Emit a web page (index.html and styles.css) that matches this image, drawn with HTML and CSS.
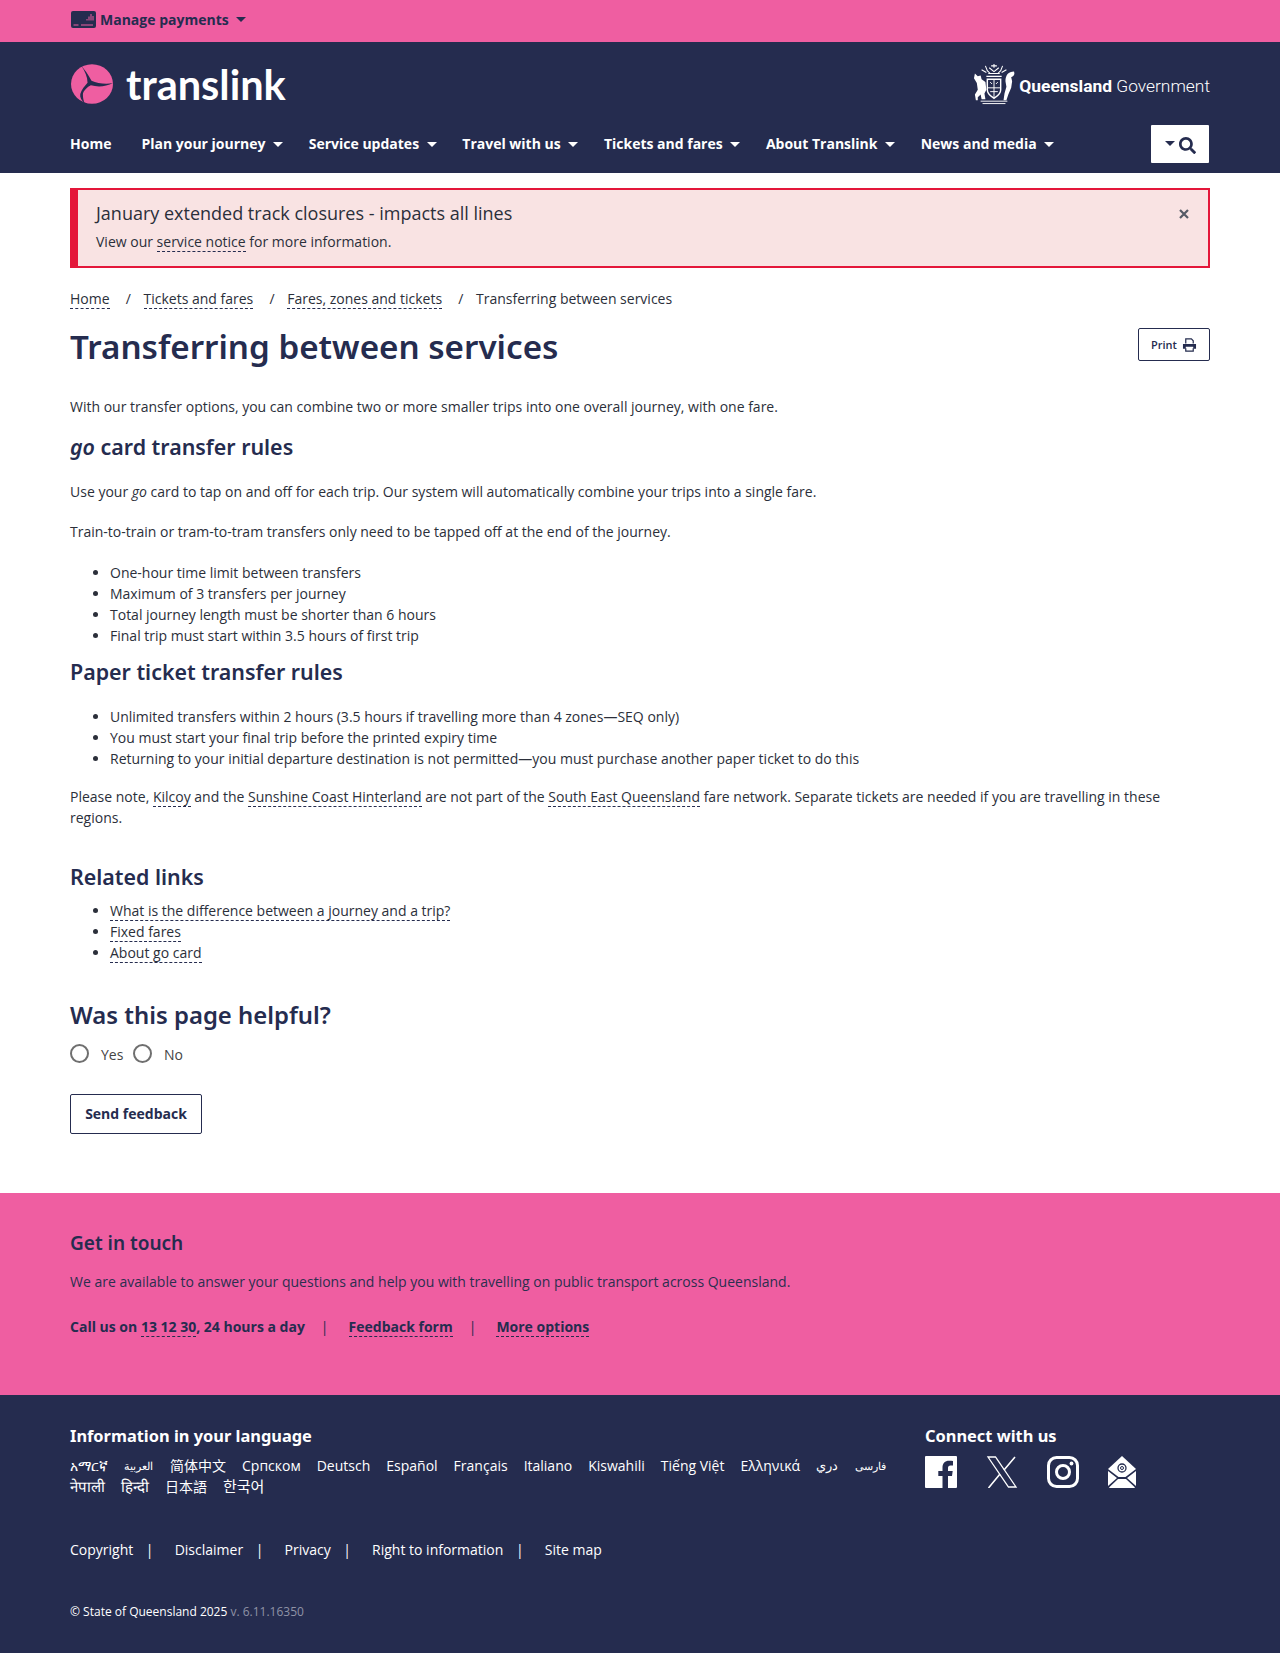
FILE: index.html
```html
<!DOCTYPE html>
<html lang="en">
<head>
<meta charset="utf-8">
<title>Transferring between services</title>
<link rel="stylesheet" href="styles.css">
</head>
<body>
<div class="topbar">
  <div class="wrap topbar-in">
    <svg class="card-ico" viewBox="0 0 25 17" width="25" height="17"><rect width="25" height="17" rx="2" fill="#252c4f"/><path d="M2.500 14h5M10 14h12" stroke="#ef5ea1" stroke-width="1"/><path d="M16 9.500V8M18 9.500V5.500M20 9.500V3M22 9.500V5" stroke="#ef5ea1" stroke-width="1"/></svg>
    <span class="pay">Manage payments</span><i class="caret dark"></i>
  </div>
</div>
<header class="head">
  <div class="wrap">
    <div class="brand-row">
      <div class="logo">
        <svg viewBox="0 0 127 120" width="42" height="40"><ellipse cx="63.500" cy="60" rx="63.500" ry="60" fill="#ef5ea1"/><path d="M30 3C40 15 52 30 62 50 80 58 106 62 127 57 106 68 82 70 60 64 50 68 36 82 36 92 36 102 38 112 42 119 32 110 26 100 28 90 32 76 42 66 50 56 50 38 42 20 30 3Z" fill="#252c4f"/></svg>
        <span class="logo-text">translink</span>
      </div>
      <div class="qg">
        <svg class="crest" viewBox="0 0 44 44" width="42" height="42" fill="none" stroke="#fff"><path d="M22 1v4M19 3h6M17 5l5 4 5-4M13 3l2 5 3 3M31 3l-2 5-3 3M9 7l5 3M35 7l-5 3M16 11h12M14 14h16" stroke-width="1.100"/><path d="M15 17h14v11c0 5-4 7-7 9-3-2-7-4-7-9z" stroke-width="1.500"/><path d="M22 17v20M15 26h14M18 20l2 2M26 20l-2 2M18 30h8" stroke-width="1"/><path d="M2 11l3 3 3-1 1 4 4 3 1 8-2 4 1 6H9l-1-5-3 3v3H3l-1-6 3-5-1-7-3-5z" fill="#fff" stroke="none"/><path d="M43 9c-6 0-9 4-9 10l1 6-2 7-1 7h3l2-6 3-7 1-7-1-4c3-1 4-3 3-6z" fill="#fff" stroke="none"/><path d="M8 40h28M10 42.500h24" stroke-width="1"/></svg>
        <span><b>Queensland</b> Government</span>
      </div>
    </div>
    <nav class="nav">
      <a>Home</a>
      <a>Plan your journey<i class="caret"></i></a>
      <a>Service updates<i class="caret"></i></a>
      <a>Travel with us<i class="caret"></i></a>
      <a>Tickets and fares<i class="caret"></i></a>
      <a>About Translink<i class="caret"></i></a>
      <a>News and media<i class="caret"></i></a>
      <button class="search"><i class="caret dark small"></i><svg viewBox="0 0 512 512" width="17" height="17"><path fill="#252c4f" d="M505 442.700L405.300 343c-4.500-4.500-10.600-7-17-7H372c27.600-35.300 44-79.700 44-128C416 93.100 322.900 0 208 0S0 93.100 0 208s93.100 208 208 208c48.300 0 92.700-16.400 128-44v16.300c0 6.400 2.500 12.500 7 17l99.700 99.700c9.400 9.400 24.600 9.400 33.900 0l28.300-28.300c9.400-9.400 9.400-24.600.1-34zM208 336c-70.700 0-128-57.200-128-128 0-70.700 57.200-128 128-128 70.700 0 128 57.200 128 128 0 70.700-57.200 128-128 128z"/></svg></button>
    </nav>
  </div>
</header>
<main class="wrap main">
  <section class="alert">
    <div>
      <p class="alert-title">January extended track closures - impacts all lines</p>
      <p class="alert-sub">View our <a class="lnk">service notice</a> for more information.</p>
    </div>
    <svg class="close" viewBox="0 0 10 10" width="10" height="10"><path d="M1 1l8 8M9 1l-8 8" stroke="#555a66" stroke-width="2.200"/></svg>
  </section>
  <div class="crumbs">
    <a class="lnk">Home</a><span class="sep">/</span><a class="lnk">Tickets and fares</a><span class="sep">/</span><a class="lnk">Fares, zones and tickets</a><span class="sep">/</span><span>Transferring between services</span>
  </div>
  <div class="title-row">
    <h1>Transferring between services</h1>
    <button class="print">Print <svg viewBox="0 0 16 15" width="15" height="14"><path d="M4 6V1h6l2 2v3M4 11v3h8v-3" fill="none" stroke="#252c4f" stroke-width="1.300"/><path d="M1 6.500h14v5h-3v-2H4v2H1z" fill="#252c4f"/></svg></button>
  </div>
  <p class="intro">With our transfer options, you can combine two or more smaller trips into one overall journey, with one fare.</p>
  <h2 class="h-go"><em>go</em> card transfer rules</h2>
  <p class="p1">Use your <em>go</em> card to tap on and off for each trip. Our system will automatically combine your trips into a single fare.</p>
  <p class="p2">Train-to-train or tram-to-tram transfers only need to be tapped off at the end of the journey.</p>
  <ul class="l1">
    <li>One-hour time limit between transfers</li>
    <li>Maximum of 3 transfers per journey</li>
    <li>Total journey length must be shorter than 6 hours</li>
    <li>Final trip must start within 3.5 hours of first trip</li>
  </ul>
  <h2 class="h-paper">Paper ticket transfer rules</h2>
  <ul class="l2">
    <li>Unlimited transfers within 2 hours (3.5 hours if travelling more than 4 zones—SEQ only)</li>
    <li>You must start your final trip before the printed expiry time</li>
    <li>Returning to your initial departure destination is not permitted—you must purchase another paper ticket to do this</li>
  </ul>
  <p class="note">Please note, <a class="lnk">Kilcoy</a> and the <a class="lnk">Sunshine Coast Hinterland</a> are not part of the <a class="lnk">South East Queensland</a> fare network. Separate tickets are needed if you are travelling in these regions.</p>
  <h2 class="h-rel">Related links</h2>
  <ul class="l3">
    <li><a class="lnk">What is the difference between a journey and a trip?</a></li>
    <li><a class="lnk">Fixed fares</a></li>
    <li><a class="lnk">About go card</a></li>
  </ul>
  <h2 class="h-help">Was this page helpful?</h2>
  <div class="radios">
    <i class="radio"></i><span>Yes</span><i class="radio"></i><span>No</span>
  </div>
  <button class="send">Send feedback</button>
</main>
<section class="touch">
  <div class="wrap">
    <h2 class="touch-h">Get in touch</h2>
    <p class="touch-p">We are available to answer your questions and help you with travelling on public transport across Queensland.</p>
    <p class="touch-links"><span>Call us on <a class="lnk">13 12 30</a>, 24 hours a day</span><span class="bar">|</span><a class="lnk">Feedback form</a><span class="bar">|</span><a class="lnk">More options</a></p>
  </div>
</section>
<footer class="foot">
  <div class="wrap">
    <div class="foot-top">
      <div class="langs">
        <h3>Information in your language</h3>
        <div class="lang-list">
          <a>አማርኛ</a><a class="ar">العربية</a><a>简体中文</a><a>Српском</a><a>Deutsch</a><a>Español</a><a>Français</a><a>Italiano</a><a>Kiswahili</a><a>Tiếng Việt</a><a>Ελληνικά</a><a class="ar dr">دري</a><a class="ar">فارسی</a><a class="big">नेपाली</a><a class="big">हिन्दी</a><a>日本語</a><a class="big">한국어</a>
        </div>
      </div>
      <div class="connect">
        <h3>Connect with us</h3>
        <div class="socials">
          <svg viewBox="0 0 32 32" width="32" height="32"><path fill="#fff" d="M1 0h30a1 1 0 0 1 1 1v30a1 1 0 0 1-1 1h-8V20h4l.7-5H23v-3c0-1.500.7-2.500 2.500-2.500H28V5c-1-.2-2.500-.3-4-.3-4 0-6.500 2.400-6.500 6.800V15h-4.200v5h4.200v12H1a1 1 0 0 1-1-1V1a1 1 0 0 1 1-1z"/></svg>
          <svg viewBox="0 0 32 32" width="32" height="32"><path fill="none" stroke="#fff" stroke-width="1.300" d="M2 1h7.500L30 31h-7.500z"/><path fill="none" stroke="#fff" stroke-width="1.600" d="M29 1L18 14M14 18L2.500 32"/></svg>
          <svg viewBox="0 0 32 32" width="32" height="32"><rect x="1.500" y="1.500" width="29" height="29" rx="8" fill="none" stroke="#fff" stroke-width="3"/><circle cx="16" cy="16" r="6.500" fill="none" stroke="#fff" stroke-width="3"/><circle cx="24.500" cy="7.500" r="1.900" fill="#fff"/></svg>
          <svg viewBox="0 0 28 32" width="28" height="32"><path fill="#fff" d="M14 0l7 6.500 7 6.500-10.500 8h-7L0 13l7-6.500z"/><path fill="#fff" d="M0 15l9 7-9 8zM28 15l-9 7 9 8zM10 23h8l9 8.500a1 1 0 0 1-1 .5H2a1 1 0 0 1-1-.5z"/><circle cx="14" cy="12" r="4" fill="none" stroke="#252c4f" stroke-width="1.300"/><circle cx="14" cy="12" r="1.500" fill="none" stroke="#252c4f"/></svg>
        </div>
      </div>
    </div>
    <div class="legal">
      <a>Copyright</a><span class="pipe">|</span><a>Disclaimer</a><span class="pipe">|</span><a>Privacy</a><span class="pipe">|</span><a>Right to information</a><span class="pipe">|</span><a>Site map</a>
    </div>
    <p class="copy">© State of Queensland 2025 <span>v. 6.11.16350</span></p>
  </div>
</footer>
</body>
</html>
```
FILE: styles.css
```css
* { box-sizing: border-box; }
html, body { margin: 0; padding: 0; }
body { font-family: "Open Sans", "Noto Sans CJK SC", sans-serif; font-size: 14px; line-height: 21px; color: #2b2f3a; background: #fff; }
.wrap { width: 1140px; margin: 0 auto; }
p { margin: 0; }
h1, h2, h3 { margin: 0; font-family: "Noto Sans", sans-serif; color: #252c4f; font-weight: 600; }
ul { margin: 0; padding: 0 0 0 40px; }
.lnk { color: inherit; text-decoration: none; border-bottom: 1px dashed #252c4f; }

.topbar { height: 42px; background: #ef5ea1; }
.topbar-in { display: flex; align-items: center; height: 38px; }
.card-ico { margin: 0 0 0 1px; }
.pay { margin-left: 4px; font-weight: 700; color: #252c4f; }
.caret { display: inline-block; width: 0; height: 0; margin-left: 7.500px; border-left: 5px solid transparent; border-right: 5px solid transparent; border-top: 5px solid #fff; vertical-align: 2px; }
.caret.dark { border-top-color: #252c4f; }
.caret.small { margin: 0 4px 4px 0; }

.head { height: 131px; background: #252c4f; }
.brand-row { display: flex; justify-content: space-between; align-items: center; height: 83px; }
.logo { display: flex; align-items: center; gap: 13px; margin-left: 1px; }
.logo-text { font-family: "Lato", sans-serif; font-weight: 700; font-size: 41.500px; line-height: 44px; color: #fff; }
.qg { display: flex; align-items: center; gap: 4px; font-family: "Roboto", sans-serif; font-size: 17.400px; font-weight: 300; color: #fff; }
.qg span { position: relative; top: 3px; }
.qg b { font-weight: 700; }
.nav { display: flex; align-items: center; height: 38px; }
.nav a { position: relative; top: -1px; color: #fff; font-weight: 700; margin-right: 25.700px; white-space: nowrap; }
.nav a:first-child { margin-right: 30px; }
.search { display: flex; align-items: center; justify-content: center; width: 58px; height: 38px; margin: 0 1px 0 auto; padding: 3px 0 0; border: 0; background: #fff; border-radius: 1px; }

.main { padding-bottom: 59px; }
.alert { display: flex; justify-content: space-between; height: 80px; margin-top: 15px; padding: 10px 19px 0 18px; background: #f9e3e3; border: 2px solid #e4173a; border-left-width: 8px; }
.alert-title { font-size: 18px; line-height: 27px; color: #2b2f3a; }
.alert-sub { margin-top: 4px; }
.close { margin-top: 9px; }
.crumbs { margin-top: 20px; }
.sep { margin: 0 12.600px 0 16.200px; }
.title-row { display: flex; justify-content: space-between; align-items: flex-start; margin-top: 16px; }
h1 { font-size: 33.200px; line-height: 44px; }
.print { display: flex; align-items: center; justify-content: center; gap: 5px; width: 72px; height: 33px; margin-top: 3px; padding: 0; background: #fff; border: 1px solid #252c4f; border-radius: 2px; font: 600 11px "Open Sans", sans-serif; color: #252c4f; }
.intro { margin-top: 27px; }
h2 { font-size: 21.400px; line-height: 30px; }
.h-go { margin-top: 15px; }
.p1 { margin-top: 19px; }
.p2 { margin-top: 19px; }
.l1 { margin-top: 20px; }
.h-paper { margin-top: 11px; }
.l2 { margin-top: 19px; }
.note { margin-top: 17px; }
.h-rel { margin-top: 34px; }
.l3 { margin-top: 8px; }
.h-help { margin-top: 35px; font-size: 23.900px; line-height: 33px; }
.radios { display: flex; align-items: center; margin-top: 4px; height: 36px; color: #444; }
.radio { width: 19px; height: 19px; margin-right: 12px; border: 2px solid #6f6f6f; border-radius: 50%; }
.radios span { margin-right: 9.500px; padding-top: 3px; }
.send { display: block; width: 132px; height: 40px; margin-top: 23px; padding: 0 0 2px; background: #fff; border: 1px solid #252c4f; border-radius: 2px; font: 700 14px "Open Sans", sans-serif; color: #252c4f; }

.touch { height: 202px; padding-top: 36px; background: #ef5ea1; color: #2b2f4f; }
.touch-h { font-size: 19px; line-height: 28px; }
.touch-p { margin-top: 14px; }
.touch-links { margin-top: 24px; font-weight: 700; color: #252c4f; }
.bar { margin: 0 20px 0 16px; font-weight: 400; }

.foot { height: 258px; padding-top: 28px; background: #252c4f; color: #fff; }
.foot-top { display: flex; justify-content: space-between; }
.foot h3 { font-size: 16.400px; line-height: 26px; color: #fff; font-weight: 700; }
.langs { width: 840px; }
.lang-list { display: flex; flex-wrap: wrap; column-gap: 16px; margin-top: 6px; font-size: 14px; line-height: 21px; }
.ar { font-size: 11.300px; margin-right: 1px; }
.ar.dr { font-size: 13px; }
.big { font-size: 15px; }
.connect { width: 285px; }
.socials { display: flex; align-items: center; gap: 29px; margin-top: 7px; }
.legal { margin-top: 42px; display: flex; }
.pipe { margin: 0 21.200px 0 12.500px; color: #fff; }
.copy { margin-top: 41px; font-size: 12px; }
.copy span { color: #8f93a6; }
```
